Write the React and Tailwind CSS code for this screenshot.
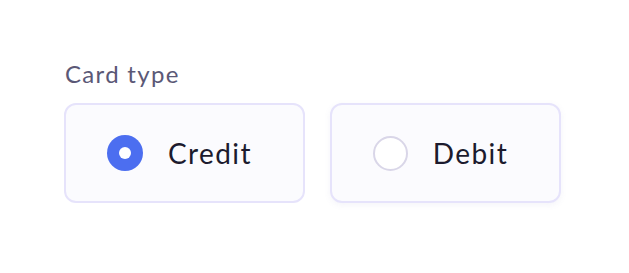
export default function App() {
  return (
    <div className="w-[629px] h-[273px] bg-white" style={{ fontFamily: "Lato, 'Noto Sans', sans-serif" }}>
      <div className="pt-[58px] pl-[64px]">
        <div className="text-[24px] leading-[32px] text-[#5b5876] tracking-[1.3px] pl-[1px]">Card type</div>
        <div className="mt-[13px] flex gap-[25px]">
          <div className="w-[241px] h-[100px] rounded-[12px] border-2 border-[#e6e3fb] bg-[#fbfbfe] flex items-center justify-center gap-[25px] pr-[10px]">
            <div className="w-[36px] h-[36px] rounded-full bg-[#4c6ef0] flex items-center justify-center">
              <div className="w-[12px] h-[12px] rounded-full bg-white" />
            </div>
            <span className="text-[28px] text-[#1c1b2e] tracking-[1.4px]">Credit</span>
          </div>
          <div className="w-[231px] h-[100px] rounded-[12px] border-2 border-[#e6e3fb] bg-[#fbfbfe] flex items-center justify-center gap-[25px] pr-[10px] shadow-[0_2px_6px_rgba(120,110,180,0.08)]">
            <div className="w-[35px] h-[35px] rounded-full border-2 border-[#d9d6e8] bg-white" />
            <span className="text-[28px] text-[#1c1b2e] tracking-[1.4px]">Debit</span>
          </div>
        </div>
      </div>
    </div>
  );
}
